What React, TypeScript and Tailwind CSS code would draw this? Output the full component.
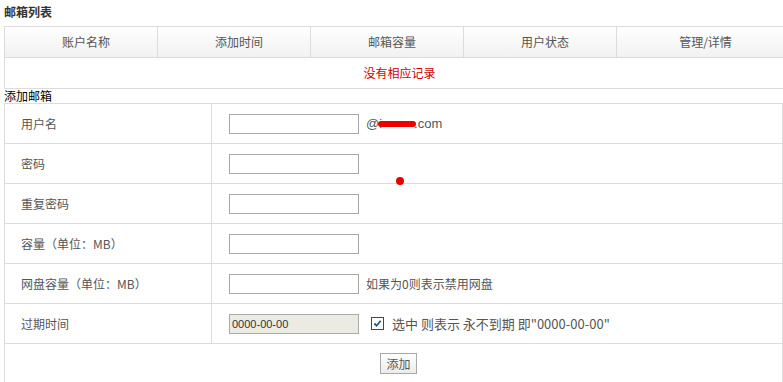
const cols = ['账户名称', '添加时间', '邮箱容量', '用户状态', '管理/详情'];

const font = { fontFamily: '"Noto Sans CJK SC", "Liberation Sans", sans-serif' };

function TextInput({ value, disabled }: { value?: string; disabled?: boolean }) {
  return (
    <input
      type="text"
      defaultValue={value}
      disabled={disabled}
      className={
        disabled
          ? 'h-[20px] w-[130px] border border-[#a9a9a9] bg-[#ebebe4] px-[2px] text-[11px] text-[#333] outline-none [font-family:"Liberation_Sans",sans-serif]'
          : 'h-[20px] w-[130px] border border-[#a9a9a9] bg-white px-[2px] text-[12px] outline-none'
      }
    />
  );
}

function FormRow({ label, children }: { label: string; children: React.ReactNode }) {
  return (
    <div className="grid h-[40px] grid-cols-[207px_1fr] border-b border-[#dcdcdc]">
      <div className="flex items-center border-r border-[#dcdcdc] pl-[16px] text-[12px] text-[#555]">{label}</div>
      <div className="flex items-center gap-[7px] pl-[17px] text-[12px] text-[#555]">{children}</div>
    </div>
  );
}

export default function App() {
  return (
    <div className="relative h-[382px] w-[783px] overflow-hidden bg-white" style={font}>
      <div className="h-[26px] pl-[4px] pt-[4px] text-[12px] font-bold leading-[16px] text-[#333]">邮箱列表</div>

      {/* list table */}
      <div className="ml-[4px] w-[781px] border border-[#dcdcdc]">
        <div className="grid h-[31px] grid-cols-[153px_153px_153px_153px_1fr] border-b border-[#dcdcdc] bg-gradient-to-b from-white to-[#f1f1f1]">
          {cols.map((c, i) => (
            <div
              key={c}
              className={`flex items-center justify-center pl-[10px] text-[12px] text-[#555] ${i < 4 ? 'border-r border-[#dcdcdc]' : ''}`}
            >
              {c}
            </div>
          ))}
        </div>
        <div className="flex h-[30px] items-center justify-center pl-[10px] text-[12px] text-[#d40000]">没有相应记录</div>
      </div>

      <div className="h-[14px] pl-[4px] text-[12px] leading-[14px] text-black">添加邮箱</div>

      {/* add form */}
      <div className="ml-[4px] w-[779px] border-x border-t border-[#dcdcdc]">
        <FormRow label="用户名">
          <TextInput />
          <span className="flex items-center text-[13px] text-[#555] [font-family:'Liberation_Sans',sans-serif]">
            @i
            <span className="-ml-[4px] mr-[-2px] inline-block h-[6px] w-[38px] rounded-full bg-[#ee0000]" />
            .com
          </span>
        </FormRow>
        <FormRow label="密码">
          <TextInput />
        </FormRow>
        <FormRow label="重复密码">
          <TextInput />
        </FormRow>
        <FormRow label="容量（单位：MB）">
          <TextInput />
        </FormRow>
        <FormRow label="网盘容量（单位：MB）">
          <TextInput />
          <span>如果为0则表示禁用网盘</span>
        </FormRow>
        <FormRow label="过期时间">
          <TextInput value="0000-00-00" disabled />
          <span className="ml-[5px] flex h-[13px] w-[13px] items-center justify-center border border-[#1c5180] bg-white">
            <svg viewBox="0 0 10 10" className="h-[9px] w-[9px]">
              <path d="M1.5 5 L4 7.5 L8.5 2" fill="none" stroke="#21578a" strokeWidth="2" />
            </svg>
          </span>
          <span className="ml-[1px] text-[13px]">选中 则表示 永不到期 即"0000-00-00"</span>
        </FormRow>
        <div className="flex h-[40px] items-start justify-center pl-[10px] pt-[9px]">
          <button className="h-[21px] w-[37px] border border-[#a9a9a9] bg-gradient-to-b from-white to-[#ececec] text-[12px] text-[#555]">
            添加
          </button>
        </div>
      </div>

      <span className="absolute left-[396px] top-[177px] h-[8px] w-[8px] rounded-full bg-[#e60000]" />
    </div>
  );
}
